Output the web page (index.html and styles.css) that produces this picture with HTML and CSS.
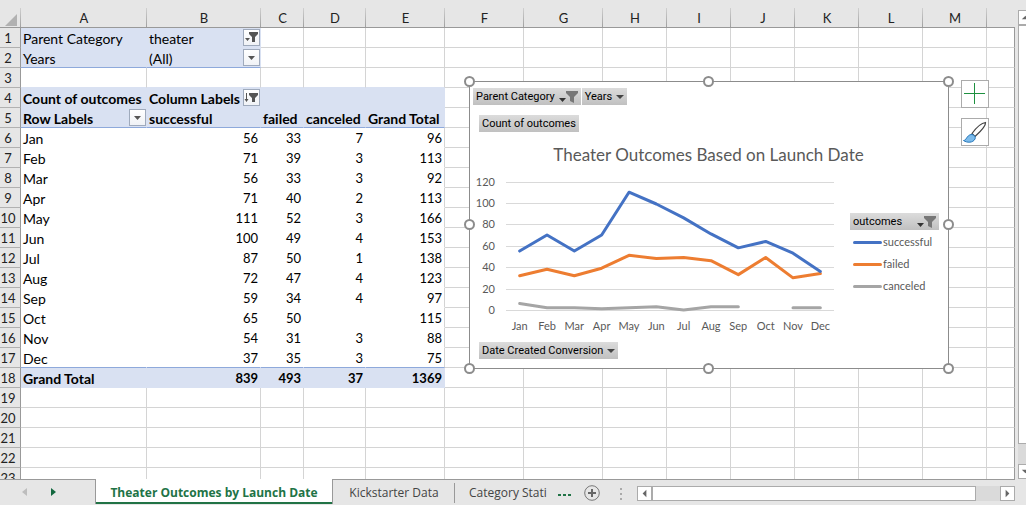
FILE: index.html
```html
<!DOCTYPE html>
<html lang="en">
<head>
<meta charset="utf-8">
<title>Theater Outcomes by Launch Date</title>
<link rel="stylesheet" href="styles.css">
</head>
<body>
<svg class="defs" aria-hidden="true">
  <symbol id="down" viewBox="0 0 8 4"><path d="M0 0h8L4 4z"/></symbol>
</svg>
<main class="app">
  <div class="workspace">
    <div class="sheet">
      <table class="grid">
        <colgroup>
          <col class="w-row"><col class="w-a"><col class="w-b"><col class="w-c"><col class="w-d">
          <col class="w-e"><col class="w-e"><col class="w-e"><col class="w-std"><col class="w-std">
          <col class="w-std"><col class="w-std"><col class="w-std"><col class="w-std"><col>
        </colgroup>
        <thead><tr id="letters"></tr></thead>
        <tbody id="rows"></tbody>
      </table>

      <section class="chart" aria-label="Theater Outcomes Based on Launch Date">
        <div class="field-row">
          <button class="field">Parent Category <svg class="filter-mark" viewBox="0 0 19 12"><path class="ink" d="M0 7h7l-3.500 4z"/><path class="soft" d="M7 0h12v2l-4 4v6l-4-2V6L7 2z"/></svg></button>
          <button class="field">Years <svg class="caret"><use href="#down"/></svg></button>
        </div>
        <button class="field values-field">Count of outcomes</button>
        <h1 class="chart-title">Theater Outcomes Based on Launch Date</h1>
        <div class="chart-body">
          <svg class="plot" id="plot" viewBox="0 0 370 160"></svg>
          <div class="legend">
            <button class="field legend-field">outcomes <svg class="filter-mark" viewBox="0 0 19 12"><path class="ink" d="M0 7h7l-3.500 4z"/><path class="soft" d="M7 0h12v2l-4 4v6l-4-2V6L7 2z"/></svg></button>
            <ul class="series">
              <li class="successful">successful</li>
              <li class="failed">failed</li>
              <li class="canceled">canceled</li>
            </ul>
          </div>
        </div>
        <button class="field axis-field">Date Created Conversion <svg class="caret"><use href="#down"/></svg></button>
        <span class="handle top left"></span><span class="handle top mid"></span><span class="handle top right"></span>
        <span class="handle center left"></span><span class="handle center right"></span>
        <span class="handle bottom left"></span><span class="handle bottom mid"></span><span class="handle bottom right"></span>
        <div class="chart-tools">
          <button aria-label="Chart elements"><svg viewBox="0 0 26 26"><path d="M2 12.500h21M12.500 2v21" stroke="#1e9140" fill="none"/></svg></button>
          <button aria-label="Chart styles"><svg viewBox="0 0 26 26"><path d="M10 14.500C14 9 19 4 23.500 3.500C24 7 18 13 13 17.500z" fill="#fff" stroke="#444" stroke-width="1.200"/><path d="M1.500 21.500c3 0 3-5 7.500-6c3 0 5 2 4 4.500c-2 4-8 4-11.500 1.500z" fill="#7cbbeb" stroke="#2576b9"/></svg></button>
        </div>
      </section>
    </div>
    <div class="vscroll">
      <button aria-label="Scroll up"><svg viewBox="0 0 14 14"><path d="M3 9h8L7 5z"/></svg></button>
      <div class="thumb"></div>
      <button aria-label="Scroll down"><svg viewBox="0 0 14 14"><path d="M3 5h8L7 9z"/></svg></button>
    </div>
  </div>

  <footer class="tabbar">
    <div class="tab-nav">
      <button aria-label="Previous sheet"><svg viewBox="0 0 5 8"><path d="M5 0v8L0 4z" fill="#bdbdbd"/></svg></button>
      <button aria-label="Next sheet"><svg viewBox="0 0 5 8"><path d="M0 0v8l5-4z" fill="#13683f"/></svg></button>
    </div>
    <button class="tab active">Theater Outcomes by Launch Date</button>
    <button class="tab data-tab">Kickstarter Data</button>
    <button class="tab stats-tab">Category Stati</button>
    <button class="more" aria-label="More sheets"><i></i><i></i><i></i></button>
    <button class="add" aria-label="New sheet"><svg viewBox="0 0 16 16"><circle cx="8" cy="8" r="7.300"/><path d="M8 4v8M4 8h8"/></svg></button>
    <span class="grip"><i></i><i></i><i></i></span>
    <div class="hscroll">
      <button aria-label="Scroll left"><svg viewBox="0 0 14 14"><path d="M9 3v8L5 7z"/></svg></button>
      <div class="thumb"></div>
      <button aria-label="Scroll right"><svg viewBox="0 0 14 14"><path d="M5 3v8l4-4z"/></svg></button>
    </div>
  </footer>
</main>
<script src="app.js"></script>
</body>
</html>
```
FILE: styles.css
```css
* { box-sizing: border-box; }
body { margin: 0; background: #e6e6e6; color: #000; font-family: Lato, "Open Sans", sans-serif; font-size: 14px; }
button { border: 0; padding: 0; margin: 0; background: none; font: inherit; color: inherit; }
svg { display: block; }
.defs { position: absolute; width: 0; height: 0; }

.app { display: flex; flex-direction: column; height: 100vh; overflow: hidden; }
.workspace { flex: 1; min-height: 0; display: flex; gap: 3px; padding-top: 8px; }
.sheet { position: relative; flex: 1; min-width: 0; overflow: hidden; }

/* Worksheet */
.grid { width: 100%; table-layout: fixed; border-collapse: separate; border-spacing: 0; }
.w-row { width: 21px; }
.w-a { width: 126px; }
.w-b { width: 114px; }
.w-c { width: 43px; }
.w-d { width: 62px; }
.w-e { width: 79px; }
.w-std { width: 64px; }
.grid th, .grid td { height: 20px; padding: 2px 0 0; line-height: 17px; white-space: nowrap; border: solid #d4d4d4; border-width: 0 1px 1px 0; }
.grid td { background: #fff; padding: 2px 2px 0; }
.grid th { font-size: 13px; font-weight: 400; color: #222; text-align: center; background: #e6e6e6; border-color: #b1b1b1; }
.grid tbody th { padding-right: 4px; border-right-color: #999; }
.grid thead th { border-bottom-color: #999; background: linear-gradient(#d0d0d0, #a0a0a0) right / 1px 100% no-repeat #e6e6e6; border-right: 0; }
.grid thead th:last-child { background: #e6e6e6; }
.grid td:last-child { border-right-color: #999; }
.grid .corner svg { width: 12px; height: 12px; margin: 2px 0 0 5px; fill: #b1b1b1; }
.grid td.num { text-align: right; font-size: 13px; }
.grid td.plain { border-color: #fff; }
.grid td.fill { background: #d9e1f2; border-color: #d9e1f2; }
.grid td.before-fill { border-bottom-color: #d9e1f2; }
.grid td.rule { border-bottom-color: #8ea9db; }
.grid td.edge { border-right-color: #d4d4d4; }
.grid td.bold { font-weight: 700; }
.cell { display: flex; align-items: center; justify-content: space-between; height: 17px; margin-right: -2px; }
.filter { flex: none; width: 17px; height: 17px; margin-bottom: 2px; border: 1px solid #9faabc; background: linear-gradient(#fff, #f0f2f6); }
.filter svg { width: 15px; height: 15px; fill: #555; }

/* Chart object */
.chart { position: absolute; left: 469px; top: 73px; width: 480px; display: flex; flex-direction: column; align-items: flex-start; padding: 6px 9px 9px 0; background: #fff; border: 1px solid #8c8c8c; color: #595959; }
.field { display: flex; align-items: center; gap: 4px; height: 17px; padding: 0 3px; font: 11px Roboto, "Open Sans", sans-serif; color: #000; background: linear-gradient(#dcdcdc, #c0c0c0); white-space: nowrap; }
.field-row { display: flex; gap: 1px; padding-left: 3px; }
.caret { width: 8px; height: 4px; fill: #444; }
.filter-mark { width: 19px; height: 12px; }
.ink { fill: #333; }
.soft { fill: #777; }
.values-field { margin: 10px 0 0 9px; }
.chart-title { align-self: center; margin: 10px 0 6px 8px; font-size: 17px; line-height: 26px; font-weight: 400; }
.chart-body { display: flex; align-self: stretch; }
.plot { width: 370px; height: 160px; margin-right: 10px; font-size: 11px; fill: #595959; }
.plot line { stroke: #d9d9d9; }
.plot polyline { fill: none; stroke-width: 3; stroke-linecap: round; stroke-linejoin: round; }
.plot .y { text-anchor: end; }
.plot .x { text-anchor: middle; }
.plot .successful { stroke: #4472c4; }
.plot .failed { stroke: #ed7d31; }
.plot .canceled { stroke: #a5a5a5; }
.legend { flex: 1; padding-top: 39px; }
.legend-field { width: 100%; justify-content: space-between; }
.series { margin: 0; padding: 2px 0 0 3px; list-style: none; font-size: 11px; line-height: 20px; display: grid; gap: 2px; }
.series li { display: flex; align-items: center; gap: 1px; }
.series li::before { content: ""; width: 29px; height: 3px; border-radius: 2px; background: #4472c4; }
.series .failed::before { background: #ed7d31; }
.series .canceled::before { background: #a5a5a5; }
.axis-field { margin: 8px 0 0 9px; }
.handle { position: absolute; width: 11px; height: 11px; border: 2px solid #8c8c8c; border-radius: 50%; background: #fff; }
.top { top: -6px; }
.center { top: calc(50% - 6px); }
.bottom { bottom: -6px; }
.left { left: -6px; }
.mid { left: calc(50% - 6px); }
.right { right: -6px; }
.chart-tools { position: absolute; left: 491px; top: -2px; display: grid; gap: 10px; }
.chart-tools button { width: 28px; height: 28px; border: 1px solid #ababab; background: #fff; }
.chart-tools svg { width: 26px; height: 26px; }

/* Scroll bars */
.vscroll { width: 8px; margin-top: 2px; overflow: hidden; display: flex; flex-direction: column; background: #dadada; }
.vscroll button, .hscroll button { flex: none; width: 15px; height: 15px; border: 1px solid #ababab; background: #fff; fill: #666; }
.vscroll .thumb { flex: 1; width: 15px; margin: 0 0 20px; border: 1px solid #ababab; background: #fff; }
.hscroll { flex: 1; display: flex; height: 15px; margin: 7px 11px 0 0; background: #dadada; }
.hscroll .thumb { flex: 1; margin-right: 24px; border: 1px solid #ababab; background: #fff; }

/* Sheet tabs */
.tabbar { flex: none; display: flex; align-items: flex-start; height: 26px; font: 12px "Open Sans", "Noto Sans", sans-serif; color: #444; background: linear-gradient(#999, #999) left top / calc(100% - 11px) 1px no-repeat; }
.tab-nav { display: flex; gap: 24px; width: 95px; padding: 9px 0 0 22px; }
.tab-nav svg { width: 5px; height: 8px; }
.tab { height: 25px; padding-top: 1px; white-space: nowrap; }
.active { width: 238px; background: #fff; border: solid #999; border-width: 0 1px; color: #217346; font-weight: 700; box-shadow: inset 0 -2px #217346; }
.data-tab { width: 122px; background: linear-gradient(#999, #999) right 4px / 1px 20px no-repeat; background-position: right 4px; }
.stats-tab { padding-left: 14px; }
.more { display: flex; gap: 2px; padding: 15px 0 0 11px; }
.more i { width: 3px; height: 2px; background: #217346; }
.add { margin: 6px 20px 0 13px; }
.add svg { width: 16px; height: 16px; fill: none; stroke: #777; }
.add path { stroke-width: 2; stroke: #666; }
.grip { display: grid; gap: 3px; padding: 9px 15px 0 0; }
.grip i { width: 2px; height: 2px; background: #aaa; }
```
FILE: app.js
```js
const months = ["Jan", "Feb", "Mar", "Apr", "May", "Jun", "Jul", "Aug", "Sep", "Oct", "Nov", "Dec"];
const data = {
  successful: [56, 71, 56, 71, 111, 100, 87, 72, 59, 65, 54, 37],
  failed: [33, 39, 33, 40, 52, 49, 50, 47, 34, 50, 31, 35],
  canceled: [7, 3, 3, 2, 3, 4, 1, 4, 4, null, 3, 3]
};
const totals = [96, 113, 92, 113, 166, 153, 138, 123, 97, 115, 88, 75];

const icons = {
  drop: '<path d="M4 6h7l-3.500 4z"/>',
  filter: '<path d="M1 8h5l-2.500 3zM5 2h9v2l-3 3v5H8V7L5 4z"/>',
  sort: '<path d="M2 3h1v6h1.500L2.500 12 .5 9H2zM5 3h9v2l-3 3v4H8V8L5 5z"/>'
};
const withFilter = (text, icon, label) =>
  `<div class="cell">${text}<button class="filter" aria-label="${label}"><svg viewBox="0 0 15 15">${icons[icon]}</svg></button></div>`;

// Each sheet row maps a column index (0 = A) to [content, classes].
const rows = Array.from({ length: 23 }, () => ({}));
rows[0] = { 0: ["Parent Category", "fill"], 1: [withFilter("theater", "filter", "Filter Parent Category"), "fill"] };
rows[1] = { 0: ["Years", "fill rule"], 1: [withFilter("(All)", "drop", "Filter Years"), "fill rule"] };
for (let c = 0; c < 5; c++) rows[2][c] = ["", "before-fill"];
rows[3] = {
  0: ["Count of outcomes", "fill bold"],
  1: [withFilter("Column Labels", "sort", "Filter Column Labels"), "fill bold"],
  2: ["", "fill"], 3: ["", "fill"], 4: ["", "fill"]
};
rows[4] = {
  0: [withFilter("Row Labels", "drop", "Filter Row Labels"), "fill bold rule"],
  1: ["successful", "fill bold rule"], 2: ["failed", "fill bold rule"],
  3: ["canceled", "fill bold rule"], 4: ["Grand Total", "fill bold rule"]
};
months.forEach((month, i) => {
  const last = i === 11 ? " rule" : "";
  rows[5 + i] = { 0: [month, "plain" + last] };
  [data.successful[i], data.failed[i], data.canceled[i] ?? "", totals[i]].forEach((v, c) => {
    rows[5 + i][c + 1] = [v, "plain num" + (c === 3 ? " edge" : "") + last];
  });
});
["Grand Total", 839, 493, 37, 1369].forEach((v, c) => {
  rows[17][c] = [v, "fill bold" + (c ? " num" : "")];
});

document.getElementById("letters").innerHTML =
  '<th class="corner"><svg viewBox="0 0 12 12"><path d="M12 0v12H0z"/></svg></th>' +
  [..."ABCDEFGHIJKLM", ""].map(l => `<th>${l}</th>`).join("");
document.getElementById("rows").innerHTML = rows.map((row, r) =>
  `<tr><th>${r + 1}</th>` + Array.from({ length: 14 }, (_, c) => {
    const [text, cls] = row[c] || ["", ""];
    return `<td class="${cls}">${text}</td>`;
  }).join("") + "</tr>").join("");

// Line chart
const xAt = i => 36 + (328 / 12) * (i + 0.5);
const yAt = v => 137 - v * 1.07;
let svg = "";
for (let v = 0; v <= 120; v += 20) {
  const y = Math.round(yAt(v));
  svg += `<line x1="36" x2="364" y1="${y - 0.5}" y2="${y - 0.5}"/><text class="y" x="25" y="${y + 3}">${v}</text>`;
}
months.forEach((m, i) => { svg += `<text class="x" x="${xAt(i)}" y="156">${m}</text>`; });
for (const name of ["canceled", "failed", "successful"]) {
  let runs = [[]];
  data[name].forEach((v, i) => v === null ? runs.push([]) : runs[runs.length - 1].push(`${xAt(i)},${yAt(v)}`));
  svg += runs.map(run => `<polyline class="${name}" points="${run.join(" ")}"/>`).join("");
}
document.getElementById("plot").innerHTML = svg;
```
